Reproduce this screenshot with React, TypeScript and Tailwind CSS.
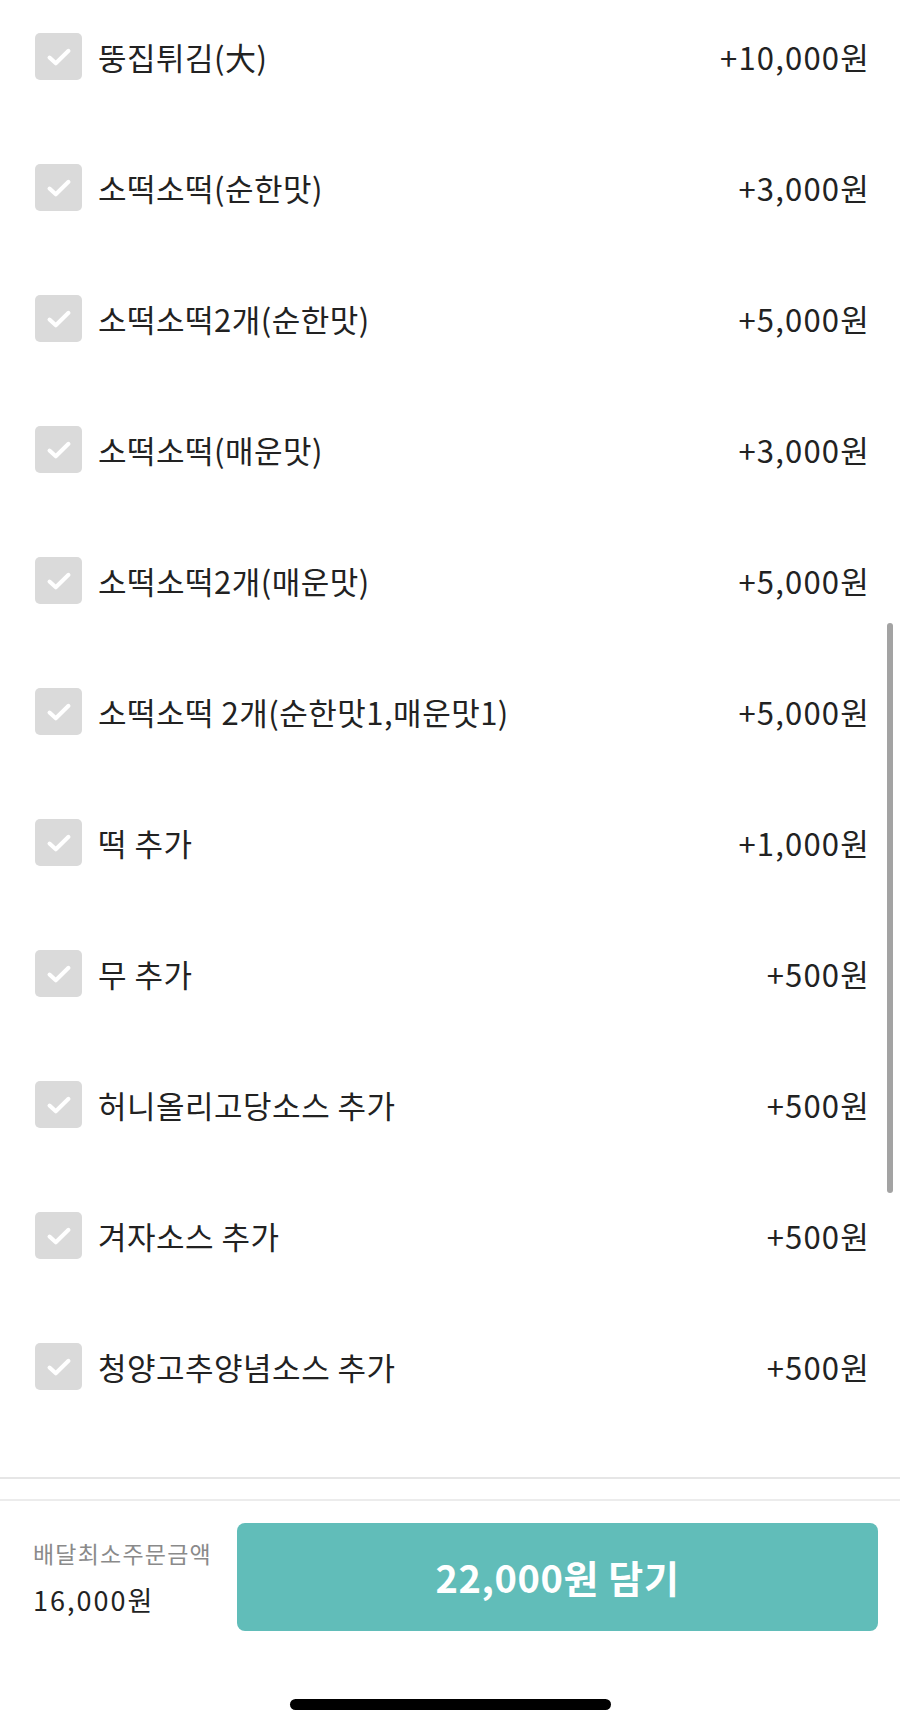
const options = [
  { name: '뚱집튀김(大)', price: '+10,000원' },
  { name: '소떡소떡(순한맛)', price: '+3,000원' },
  { name: '소떡소떡2개(순한맛)', price: '+5,000원' },
  { name: '소떡소떡(매운맛)', price: '+3,000원' },
  { name: '소떡소떡2개(매운맛)', price: '+5,000원' },
  { name: '소떡소떡 2개(순한맛1,매운맛1)', price: '+5,000원' },
  { name: '떡 추가', price: '+1,000원' },
  { name: '무 추가', price: '+500원' },
  { name: '허니올리고당소스 추가', price: '+500원' },
  { name: '겨자소스 추가', price: '+500원' },
  { name: '청양고추양념소스 추가', price: '+500원' },
]

function CheckBox() {
  return (
    <div className="w-[47px] h-[47px] rounded-[5px] bg-[#dadada] flex items-center justify-center shrink-0">
      <svg width="26" height="20" viewBox="0 0 26 20" fill="none">
        <path
          d="M3.5 10.5 L9.8 16.3 L22.5 3.8"
          stroke="#ffffff"
          strokeWidth="4"
          strokeLinecap="round"
          strokeLinejoin="round"
        />
      </svg>
    </div>
  )
}

export default function App() {
  return (
    <div
      className="relative w-[900px] h-[1726px] bg-white overflow-hidden text-[#222222]"
      style={{ fontFamily: '"Noto Sans CJK KR", "Noto Sans", sans-serif' }}
    >
      {/* option list (scrolled) */}
      <div className="h-[1477px] overflow-hidden">
        <div className="-mt-[9px]">
          {options.map((o) => (
            <div key={o.name} className="h-[131px] flex items-center pl-[35px] pr-[30px]">
              <CheckBox />
              <div className="ml-[16px] flex-1 text-[31px] leading-none tracking-[0.5px]">{o.name}</div>
              <div className="text-[31px] leading-none tracking-[1.2px]">{o.price}</div>
            </div>
          ))}
        </div>
      </div>

      <div className="h-[2px] bg-[#e6e6e6]" />
      <div className="h-[20px]" />
      <div className="h-[2px] bg-[#ececec]" />

      {/* footer */}
      <div className="flex items-center pl-[33px] pr-[22px] pt-[22px]">
        <div className="w-[204px] flex flex-col">
          <div className="text-[23px] leading-none text-[#8a8a8a] tracking-[1.2px]">배달최소주문금액</div>
          <div className="mt-[21px] text-[27px] leading-none tracking-[2px]">16,000원</div>
        </div>
        <button className="flex-1 h-[108px] rounded-[8px] bg-[#61bdb9] text-white text-[38px] font-bold leading-none tracking-[0.6px] flex items-center justify-center">
          22,000원 담기
        </button>
      </div>

      <div className="flex justify-center mt-[68px]">
        <div className="w-[321px] h-[11px] rounded-full bg-black" />
      </div>

      {/* scroll indicator */}
      <div className="absolute left-[887px] top-[623px] w-[6px] h-[570px] rounded-full bg-[#a3a3a3]" />
    </div>
  )
}
